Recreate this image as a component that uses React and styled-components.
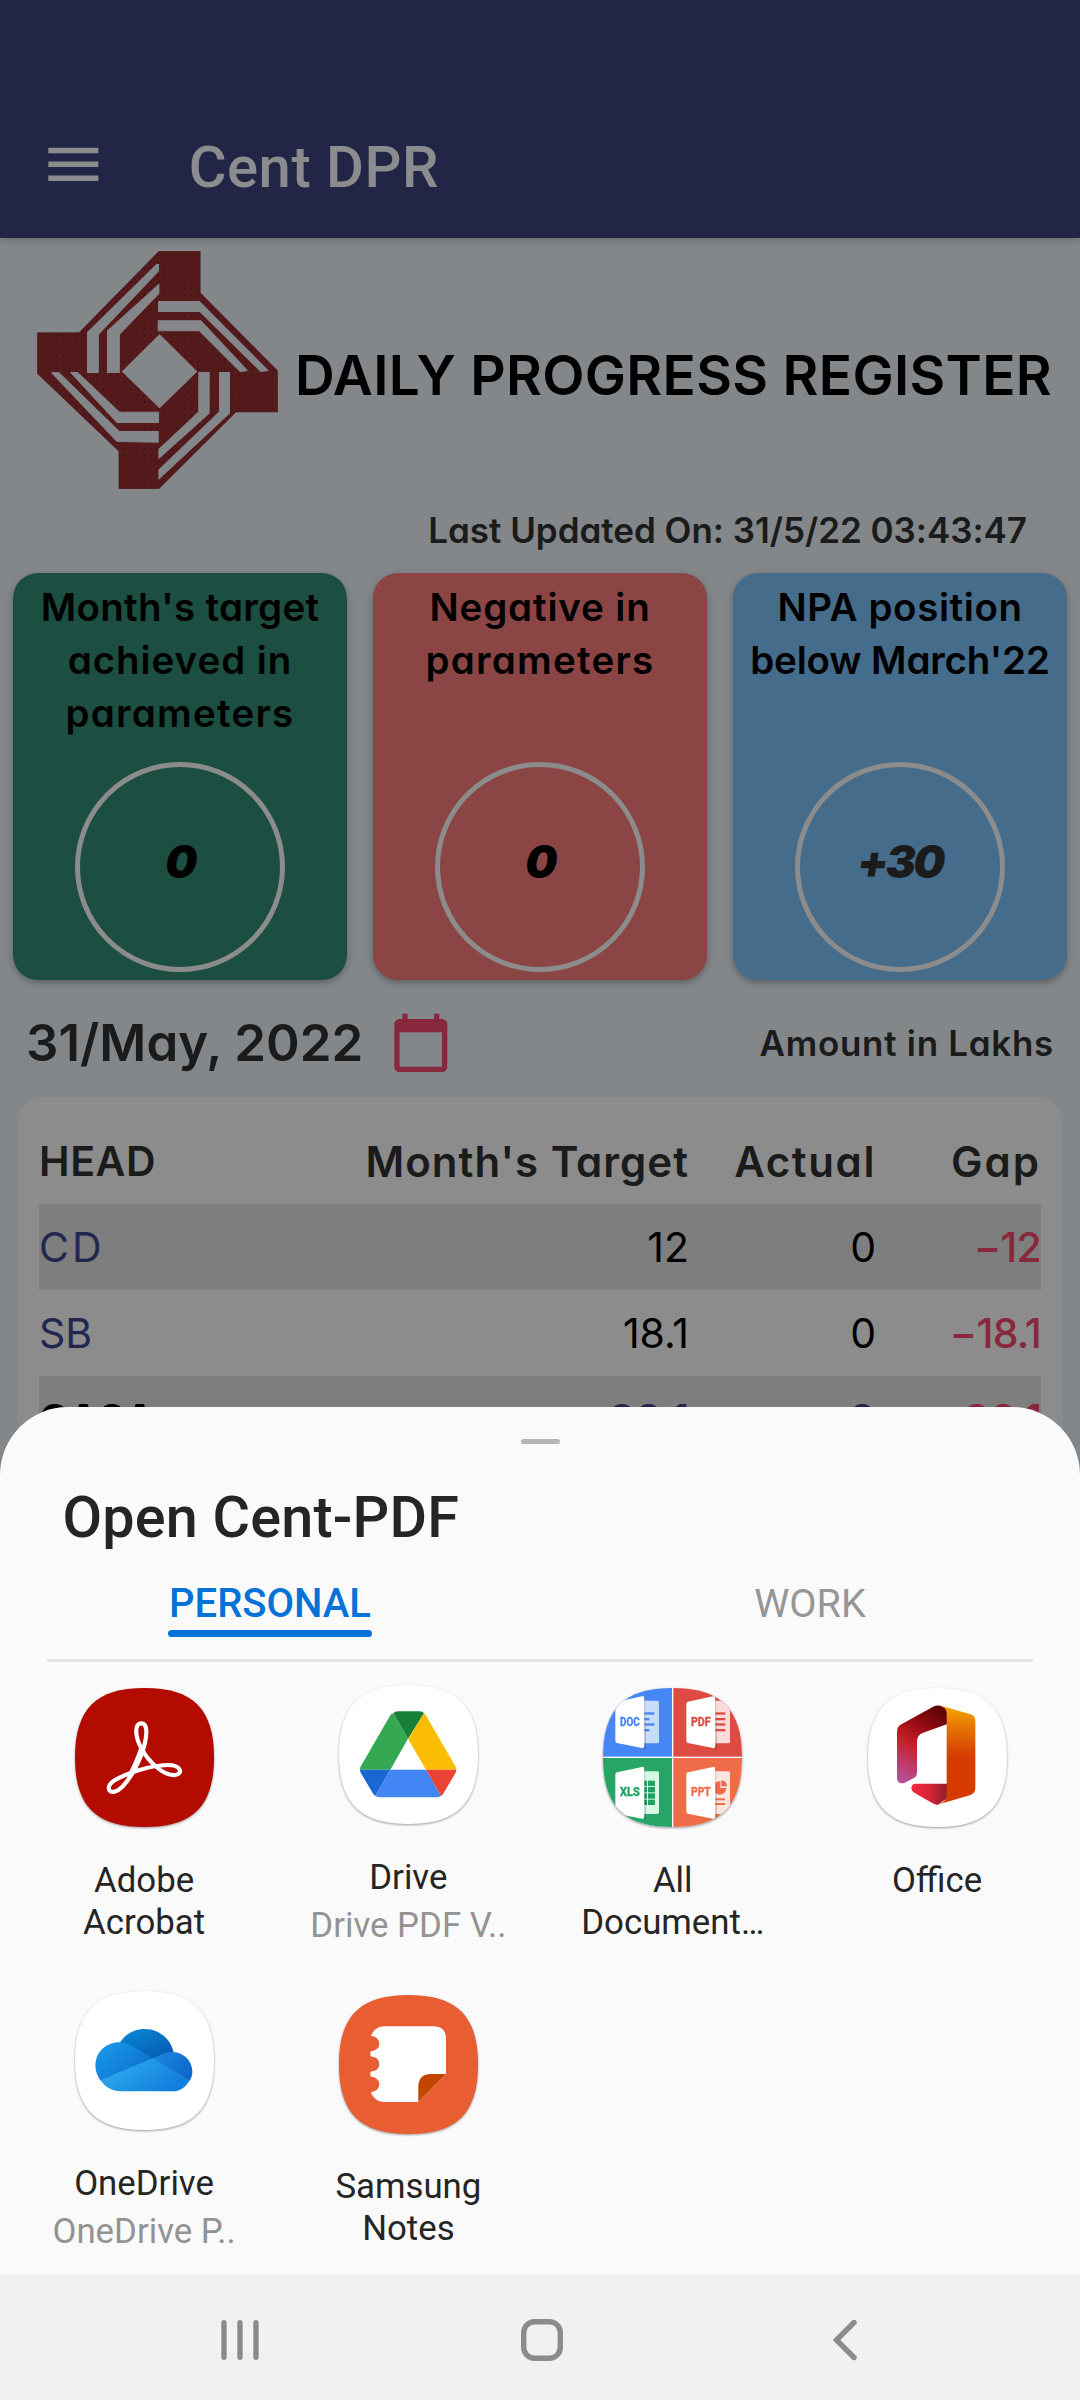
import React from "react";
import styled, { createGlobalStyle } from "styled-components";

const poppinsLike = `Inter, "Open Sans", sans-serif`;
const roboto = `Roboto, "Noto Sans", sans-serif`;

const Global = createGlobalStyle`
  * { box-sizing: border-box; }
  body { margin: 0; background: #83878a; }
`;

const Screen = styled.div`
  position: relative;
  width: 1080px;
  height: 2400px;
  overflow: hidden;
  background: #83878a;
  color: #1b1b1b;
  font-family: ${poppinsLike};
  font-feature-settings: "cv11";
  white-space: nowrap;
`;

const Dashboard = styled.main`
  display: flex;
  flex-direction: column;
`;

const AppBar = styled.header`
  display: flex;
  align-items: center;
  height: 238px;
  padding: 90px 0 0 39.6px;
  background: #232547;
  box-shadow: 0 2px 7px rgba(0, 0, 0, 0.22);
`;

const MenuIcon = styled.svg`
  width: 66.7px;
  height: 66.7px;
  fill: #8c8c8e;
`;

const AppTitle = styled.h1`
  margin: 0 0 0 82.4px;
  padding-top: 5px;
  font: 500 58px/70px ${roboto};
  letter-spacing: 0.5px;
  color: #8c8c8e;
`;

const Banner = styled.section`
  display: flex;
  align-items: center;
  gap: 17.5px;
  height: 238px;
  margin-top: 13px;
  padding-left: 36.5px;
`;

const Logo = styled.svg`
  width: 241px;
  height: 238px;
`;

const BannerTitle = styled.h2`
  margin: 0;
  padding-top: 10.6px;
  font-size: 55px;
  font-weight: 600;
  line-height: 66px;
  letter-spacing: 0.33px;
  color: #000;
`;

const Updated = styled.p`
  height: 84px;
  margin: 0;
  padding-right: 53px;
  text-align: right;
  font-size: 35px;
  font-weight: 600;
  line-height: 83px;
  letter-spacing: -0.03px;
`;

const Cards = styled.section`
  display: flex;
  gap: 26px;
  padding: 0 13px;
`;

const Card = styled.article`
  display: flex;
  flex: 1;
  flex-direction: column;
  align-items: center;
  height: 407px;
  padding: 8px 0;
  border-radius: 25px;
  background: ${(p) => p.$tone};
  box-shadow: 0 3px 7px rgba(0, 0, 0, 0.28);
`;

const CardLine = styled.span`
  font-size: 38.5px;
  font-weight: 600;
  line-height: 53px;
  letter-spacing: ${(p) => p.$tracking}px;
  color: #000;
`;

const Ring = styled.div`
  display: flex;
  align-items: center;
  justify-content: center;
  width: 210px;
  height: 210px;
  margin-top: auto;
  padding-bottom: 11px;
  border: 5px solid #8c8c8c;
  border-radius: 50%;
  font-size: 45px;
  font-style: italic;
  font-weight: 900;
  letter-spacing: -2.6px;
  color: ${(p) => p.$ink};
`;

const DateRow = styled.section`
  display: flex;
  align-items: center;
  height: 117px;
  padding: 8px 26px 0;
`;

const DateText = styled.span`
  width: 362.5px;
  font-size: 51px;
  font-weight: 600;
  letter-spacing: 0;
`;

const CalendarIcon = styled.svg`
  width: 63.6px;
  height: 63.6px;
  fill: #88283c;
`;

const Unit = styled.span`
  margin-left: auto;
  font-size: 35px;
  font-weight: 600;
  letter-spacing: 0.7px;
`;

const Table = styled.section`
  margin: 0 18px;
  height: 600px;
  padding: 21px;
  border-radius: 25px;
  background: #8c8c8c;
`;

const Row = styled.div`
  display: grid;
  grid-template-columns: 250px 400px 187px 165px;
  align-items: center;
  height: 86px;
  background: ${(p) => (p.$striped ? "#7e7e7e" : "transparent")};
`;

const Cell = styled.span`
  text-align: ${(p) => (p.$first ? "left" : "right")};
  font-size: ${(p) => p.$size || 41}px;
  font-weight: ${(p) => p.$weight || 400};
  letter-spacing: ${(p) => p.$tracking || 0}px;
  color: ${(p) => p.$ink || "#1b1b1b"};
`;

const Bottom = styled.div`
  position: absolute;
  left: 0;
  right: 0;
  bottom: 0;
`;

const Sheet = styled.section`
  height: 867px;
  padding-top: 32px;
  border-radius: 68px 68px 0 0;
  background: #fafafa;
  color: #252525;
  font-family: ${roboto};
  font-feature-settings: normal;
`;

const Handle = styled.div`
  width: 39px;
  height: 5px;
  margin: 0 auto;
  border-radius: 3px;
  background: #b5b5b5;
`;

const SheetTitle = styled.h3`
  margin: 39px 0 0 62.5px;
  font-size: 57.5px;
  font-weight: 500;
  line-height: 70px;
  letter-spacing: 0.2px;
`;

const Tabs = styled.div`
  display: flex;
  margin-top: 27px;
`;

const Tab = styled.div`
  display: flex;
  flex: 1;
  flex-direction: column;
  align-items: center;
  font-size: ${(p) => (p.$active ? 40 : 39.6)}px;
  font-weight: ${(p) => (p.$active ? 500 : 400)};
  line-height: 47px;
  color: ${(p) => (p.$active ? "#0672d8" : "#969696")};

  &::after {
    content: "";
    width: 204px;
    height: 7px;
    margin-top: 3px;
    border-radius: 4px;
    background: ${(p) => (p.$active ? "#0672d8" : "transparent")};
  }
`;

const Divider = styled.div`
  height: 3px;
  margin: 22px 47px 0;
  background: #e5e5e5;
`;

const Apps = styled.div`
  display: grid;
  grid-template-columns: repeat(4, 264.33px);
  grid-auto-rows: 306.3px;
  padding-left: 11.9px;
`;

const AppTile = styled.div`
  display: flex;
  flex-direction: column;
  align-items: center;
  padding-top: ${(p) => (p.$raised ? 23 : 26.3)}px;
  font-size: 34.8px;
  line-height: 42px;
  text-align: center;
`;

const AppIcon = styled.svg`
  width: 139px;
  height: 139px;
  margin-bottom: 31.6px;
  overflow: visible;
  filter: drop-shadow(0 1px 1.3px rgba(0, 0, 0, 0.38));
`;

const AppSub = styled.span`
  margin-top: 6px;
  color: #939393;
`;

const NavBar = styled.nav`
  display: grid;
  grid-template-columns: 299.7px 312px auto;
  align-items: center;
  height: 126px;
  padding: 6px 0 0 221px;
  background: #f1f1f1;
`;

const NavIcon = styled.svg`
  width: ${(p) => p.$w}px;
  height: 42px;
  fill: none;
  stroke: #8b8b8b;
  stroke-width: 5.4;
`;

const SQUIRCLE =
  "M208.5 0C354 0 417 63 417 208.5S354 417 208.5 417S0 354 0 208.5S63 0 208.5 0Z";

function Tile({ x, y, fill }) {
  return <path d={SQUIRCLE} transform={`translate(${x} ${y})`} fill={fill} />;
}

function BankLogo() {
  return (
    <Logo viewBox="106 453 700 713" preserveAspectRatio="none">
      <defs>
        <pattern id="grain" width="19.6" height="20" patternUnits="userSpaceOnUse">
          <rect width="19.6" height="20" fill="#541a1c" />
          <circle cx="6" cy="6" r="2.6" fill="#3c1012" />
        </pattern>
      </defs>
      <path
        fill="url(#grain)"
        stroke="#4d1a1c"
        strokeWidth="2"
        d="M460 454H580V578L805 812V935H684L460 1165H344V1053L107 820V698H228Z"
      />
      <g fill="#83878a" stroke="#83878a" strokeWidth="3" strokeLinejoin="round">
        <path d="M453 494L459 493V513L284 703V817H253V697Z" />
        <path d="M460 553V580L345 703V817H311V692Z" />
        <path d="M459 604H577L777 811L756 814L579 634H459Z" />
        <path d="M458 662H582L717 811L696 814L578 692H458Z" />
        <path d="M576 817H606V939L460 1074V1047L576 935Z" />
        <path d="M636 817H665V939L460 1136V1109L636 935Z" />
        <path d="M204 817H224L345 936H459V967H339Z" />
        <path d="M149 818H170L345 994H458V1026L339 1024Z" />
        <path d="M462 704L570 814L462 922L354 814Z" />
      </g>
    </Logo>
  );
}

function Acrobat() {
  return (
    <AppIcon viewBox="103 55 417 417">
      <Tile x={103} y={55} fill="#b30b00" />
      <g fill="none" stroke="#fff" strokeLinejoin="round" strokeLinecap="round">
        <path
          strokeWidth="12.5"
          d="M302 161C322 161 320 197 308 238C292 286 254 358 222 366C199 370 198 347 222 332C260 309 330 287 380 286C424 286 427 313 404 316C366 320 322 272 303 238C284 204 279 161 302 161Z"
        />
        <path strokeWidth="17" d="M302 242C294 266 284 288 273 310" />
      </g>
    </AppIcon>
  );
}

function Drive() {
  return (
    <AppIcon viewBox="897 46 417 417">
      <Tile x={897} y={46} fill="#fff" />
      <path fill="#34a853" d="M1060 131L1104 207L1051 300H960Q959 295 963 289L1051 137Q1054 132 1060 131Z" />
      <path fill="#188038" d="M1060 131Q1065 125 1074 125H1140Q1147 125 1152 131L1104 207Z" />
      <path fill="#fbbc04" d="M1152 131Q1156 134 1159 139L1246 290Q1249 295 1249 300H1158L1104 207Z" />
      <path fill="#1967d2" d="M960 300H1051L1006 379Q1001 375 998 370L963 311Q960 305 960 300Z" />
      <path fill="#4285f4" d="M1051 300H1158L1203 379Q1197 383 1189 383H1020Q1012 383 1006 379Z" />
      <path fill="#ea4335" d="M1158 300H1249Q1249 305 1246 311L1211 370Q1208 376 1203 379Z" />
    </AppIcon>
  );
}

function DocBadge({ x, y, ink, page, label, children }) {
  return (
    <g transform={`translate(${x} ${y})`}>
      <rect x="240" y="93" width="57" height="128" rx="5" fill={page} />
      <g fill={ink}>{children}</g>
      <path d="M255 84L258 234L250 240V82Z" fill="#000" opacity="0.22" />
      <path fill="#fff" d="M171 96L246 80Q253 78 253 86V230Q253 237 246 235L171 220Q166 219 166 214V102Q166 97 171 96Z" />
      <text
        x="180"
        y="168"
        fill={ink}
        stroke={ink}
        strokeWidth="1.2"
        fontFamily="Roboto, sans-serif"
        fontWeight="700"
        fontSize="37"
        textLength="59"
        lengthAdjust="spacingAndGlyphs"
      >
        {label}
      </text>
    </g>
  );
}

function AllDocuments() {
  return (
    <AppIcon viewBox="129 55 417 417">
      <defs>
        <clipPath id="docsClip">
          <path d={SQUIRCLE} transform="translate(129 55)" />
        </clipPath>
      </defs>
      <g clipPath="url(#docsClip)">
        <rect x="129" y="55" width="420" height="420" fill="#fff" />
        <rect x="129" y="55" width="207" height="206" fill="#4687f4" />
        <rect x="340" y="55" width="208" height="206" fill="#dd4b43" />
        <rect x="129" y="265" width="207" height="208" fill="#26a566" />
        <rect x="340" y="265" width="208" height="208" fill="#ee6c48" />
        <DocBadge x={0} y={0} ink="#4687f4" page="#c8dcfc" label="DOC">
          <rect x="250" y="128" width="33" height="7" />
          <rect x="250" y="145" width="18" height="7" />
          <rect x="250" y="161" width="33" height="7" />
          <rect x="250" y="178" width="18" height="7" />
        </DocBadge>
        <DocBadge x={213} y={0} ink="#dd4b43" page="#fbdcdb" label="PDF">
          <rect x="250" y="128" width="33" height="7" />
          <rect x="250" y="145" width="33" height="7" />
          <rect x="250" y="161" width="33" height="7" />
          <rect x="250" y="178" width="33" height="7" />
        </DocBadge>
        <DocBadge x={0} y={212} ink="#22a260" page="#d5f9e5" label="XLS">
          {[121, 140, 159, 178].map((top) => (
            <React.Fragment key={top}>
              <rect x="246" y={top} width="15" height="16" />
              <rect x="264" y={top} width="21" height="16" />
            </React.Fragment>
          ))}
        </DocBadge>
        <DocBadge x={213} y={212} ink="#ee6c48" page="#fde5df" label="PPT">
          <path d="M268 123A20 20 0 1 0 286 143H268Z" />
          <path d="M271 120A19 19 0 0 1 288 138H271Z" />
          <rect x="250" y="174" width="32" height="6" />
          <rect x="250" y="188" width="32" height="6" />
        </DocBadge>
      </g>
    </AppIcon>
  );
}

function Office() {
  return (
    <AppIcon viewBox="922 55 417 417">
      <defs>
        <linearGradient id="ofLeft" gradientUnits="userSpaceOnUse" x1="1150" y1="120" x2="1030" y2="340">
          <stop offset="0" stopColor="#5a0205" />
          <stop offset="0.25" stopColor="#8c0a10" />
          <stop offset="0.55" stopColor="#c52027" />
          <stop offset="0.8" stopColor="#bd3c6c" />
          <stop offset="1" stopColor="#b652a0" />
        </linearGradient>
        <linearGradient id="ofRight" x1="0" y1="0" x2="0" y2="1">
          <stop offset="0" stopColor="#f6a800" />
          <stop offset="0.2" stopColor="#e77a02" />
          <stop offset="0.52" stopColor="#d83b01" />
          <stop offset="1" stopColor="#d83b01" />
        </linearGradient>
        <linearGradient id="ofFoot" x1="0" y1="0" x2="1" y2="0">
          <stop offset="0" stopColor="#f5273f" />
          <stop offset="0.5" stopColor="#d82438" />
          <stop offset="1" stopColor="#8c1f2b" />
        </linearGradient>
      </defs>
      <Tile x={922} y={55} fill="#fff" />
      <path
        fill="url(#ofLeft)"
        d="M1009 186Q1009 171 1022 164L1116 112Q1130 104 1146 111L1162 120V162L1086 190Q1069 197 1069 214V309Q1069 319 1061 324L1031 340Q1009 345 1009 325Z"
      />
      <path
        fill="url(#ofFoot)"
        d="M1066 342H1160V385L1132 405Q1124 406 1116 401L1062 370Q1052 363 1052 355Q1053 342 1066 342Z"
      />
      <path
        fill="url(#ofRight)"
        d="M1136 107L1230 134Q1244 139 1244 154V356Q1244 370 1230 376L1130 405Q1158 399 1158 374V133Q1158 112 1136 107Z"
      />
    </AppIcon>
  );
}

function OneDrive() {
  return (
    <AppIcon viewBox="103 65 417 417">
      <defs>
        <linearGradient id="odBack" x1="0" y1="0" x2="1" y2="1">
          <stop offset="0" stopColor="#0b8ad6" />
          <stop offset="1" stopColor="#0457ae" />
        </linearGradient>
        <linearGradient id="odLeft" x1="0" y1="0" x2="1" y2="0.8">
          <stop offset="0" stopColor="#1b9dea" />
          <stop offset="1" stopColor="#0c6ccd" />
        </linearGradient>
        <linearGradient id="odRight" x1="0" y1="0" x2="1" y2="0.6">
          <stop offset="0" stopColor="#1c8be2" />
          <stop offset="1" stopColor="#0e68cc" />
        </linearGradient>
        <linearGradient id="odBase" x1="0" y1="0" x2="1" y2="0.5">
          <stop offset="0" stopColor="#35b3f0" />
          <stop offset="1" stopColor="#117fdd" />
        </linearGradient>
      </defs>
      <Tile x={103} y={65} fill="#fff" />
      <path fill="url(#odBack)" d="M236 222C256 190 286 179 312 179C352 179 390 206 399 250L340 270Z" />
      <path fill="url(#odLeft)" d="M180 334C158 306 158 262 187 237C212 216 246 214 270 228L338 268Z" />
      <path fill="url(#odRight)" d="M334 268L372 252C410 238 452 262 455 304Q456 321 446 335Z" />
      <path fill="url(#odBase)" d="M180 333L336 267L446 334C434 356 416 366 396 366H240C214 366 193 353 180 333Z" />
    </AppIcon>
  );
}

function SamsungNotes() {
  return (
    <AppIcon viewBox="897 74 417 417">
      <Tile x={897} y={74} fill="#e95d32" />
      <path
        fill="#fff"
        d="M1034 168H1180Q1218 168 1218 206V311L1135 395H1034Q1005 395 993 368L996 364A22 22 0 0 0 996 320Q991 320 991 315V308Q991 303 996 303A22 22 0 0 0 996 259Q991 259 991 254V247Q991 242 996 242A22 22 0 0 0 996 198L993 195Q1005 168 1034 168Z"
      />
      <path fill="#c34600" d="M1218 311L1135 395V350Q1135 311 1174 311Z" />
    </AppIcon>
  );
}

const CARDS = [
  { tone: "#1c4f41", ink: "#000", value: "0", lines: [["Month's target", 0.3], ["achieved in", 0.95], ["parameters", 1.25]] },
  { tone: "#8b4545", ink: "#000", value: "0", lines: [["Negative in", 0.85], ["parameters", 1.25]] },
  { tone: "#466c8b", ink: "#1b1b1b", value: "+30", lines: [["NPA position", 0.6], ["below March'22", -0.15]] },
];

const NAVY = "#232750";
const RED = "#88283c";

const ROWS = [
  { head: "CD", tracking: 3, target: "12", actual: "0", gap: "−12", headInk: NAVY, ink: "#000", weight: 430 },
  { head: "SB", target: "18.1", actual: "0", gap: "−18.1", headInk: NAVY, ink: "#000", weight: 430 },
  { head: "CASA", target: "30.1", actual: "0", gap: "−30.1", headInk: "#000", ink: NAVY, weight: 700 },
];

const APPS = [
  { Icon: Acrobat, name: ["Adobe", "Acrobat"] },
  { Icon: Drive, name: ["Drive"], sub: "Drive PDF V.." },
  { Icon: AllDocuments, name: ["All", "Document…"] },
  { Icon: Office, name: ["Office"] },
  { Icon: OneDrive, name: ["OneDrive"], sub: "OneDrive P.." },
  { Icon: SamsungNotes, name: ["Samsung", "Notes"] },
];

export default function App() {
  return (
    <Screen>
      <Global />
      <Dashboard>
        <AppBar>
          <MenuIcon viewBox="0 0 24 24">
            <path d="M3 18h18v-2H3v2zm0-5h18v-2H3v2zm0-7v2h18V6H3z" />
          </MenuIcon>
          <AppTitle>Cent DPR</AppTitle>
        </AppBar>
        <Banner>
          <BankLogo />
          <BannerTitle>DAILY PROGRESS REGISTER</BannerTitle>
        </Banner>
        <Updated>Last Updated On: 31/5/22 03:43:47</Updated>
        <Cards>
          {CARDS.map((card) => (
            <Card key={card.tone} $tone={card.tone}>
              {card.lines.map(([text, tracking]) => (
                <CardLine key={text} $tracking={tracking}>{text}</CardLine>
              ))}
              <Ring $ink={card.ink}>{card.value}</Ring>
            </Card>
          ))}
        </Cards>
        <DateRow>
          <DateText>31/May, 2022</DateText>
          <CalendarIcon viewBox="0 0 24 24">
            <path d="M20 3h-1V1h-2v2H7V1H5v2H4c-1.1 0-2 .9-2 2v16c0 1.1.9 2 2 2h16c1.1 0 2-.9 2-2V5c0-1.1-.9-2-2-2zm0 18H4V8h16v13z" />
          </CalendarIcon>
          <Unit>Amount in Lakhs</Unit>
        </DateRow>
        <Table>
          <Row>
            <Cell $first $weight={600} $tracking={0.6}>HEAD</Cell>
            <Cell $weight={600} $size={42} $tracking={1}>Month's Target</Cell>
            <Cell $weight={600} $size={42} $tracking={1.6}>Actual</Cell>
            <Cell $weight={600} $size={42} $tracking={2}>Gap</Cell>
          </Row>
          {ROWS.map((row, i) => (
            <Row key={row.head} $striped={i % 2 === 0}>
              <Cell $first $weight={row.weight} $ink={row.headInk} $tracking={row.tracking}>{row.head}</Cell>
              <Cell $weight={row.weight} $ink={row.ink}>{row.target}</Cell>
              <Cell $weight={row.weight} $ink={row.ink}>{row.actual}</Cell>
              <Cell $weight={row.weight < 500 ? 500 : 700} $ink={RED} $tracking={-0.8}>{row.gap}</Cell>
            </Row>
          ))}
        </Table>
      </Dashboard>

      <Bottom>
        <Sheet>
          <Handle />
          <SheetTitle>Open Cent-PDF</SheetTitle>
          <Tabs>
            <Tab $active>PERSONAL</Tab>
            <Tab>WORK</Tab>
          </Tabs>
          <Divider />
          <Apps>
            {APPS.map(({ Icon, name, sub }) => (
              <AppTile key={name[0]} $raised={Boolean(sub)}>
                <Icon />
                {name.map((line) => (
                  <span key={line}>{line}</span>
                ))}
                {sub && <AppSub>{sub}</AppSub>}
              </AppTile>
            ))}
          </Apps>
        </Sheet>
        <NavBar>
          <NavIcon $w={38} viewBox="0 0 38 42" strokeLinecap="round">
            <path d="M3 3.7V38.3M19 3.7V38.3M35 3.7V38.3" />
          </NavIcon>
          <NavIcon $w={42} viewBox="0 0 42 42">
            <rect x="2.7" y="2.7" width="36.6" height="36.6" rx="11" />
          </NavIcon>
          <NavIcon $w={24} viewBox="0 0 24 42" strokeLinecap="round">
            <path d="M21 3.5L3.5 21L21 38.5" />
          </NavIcon>
        </NavBar>
      </Bottom>
    </Screen>
  );
}
